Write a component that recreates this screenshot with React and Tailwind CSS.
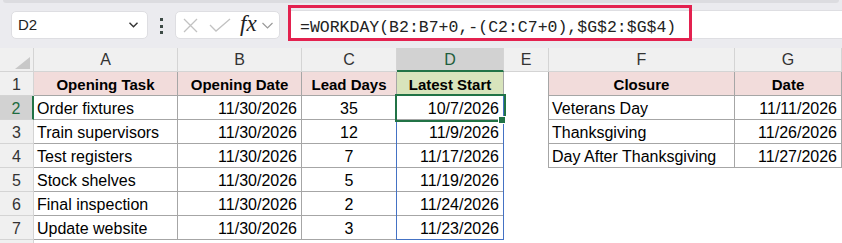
import React from 'react';

const W = ['w-[34px]', 'w-[144px]', 'w-[124px]', 'w-[95px]', 'w-[107px]', 'w-[45px]', 'w-[186px]', 'w-[107px]'];
const letters = ['A', 'B', 'C', 'D', 'E', 'F', 'G'];

const tasks = [
  ['Order fixtures', '11/30/2026', '35', '10/7/2026'],
  ['Train supervisors', '11/30/2026', '12', '11/9/2026'],
  ['Test registers', '11/30/2026', '7', '11/17/2026'],
  ['Stock shelves', '11/30/2026', '5', '11/19/2026'],
  ['Final inspection', '11/30/2026', '2', '11/24/2026'],
  ['Update website', '11/30/2026', '3', '11/23/2026'],
];

const closures = [
  ['Veterans Day', '11/11/2026'],
  ['Thanksgiving', '11/26/2026'],
  ['Day After Thanksgiving', '11/27/2026'],
];

const line = 'border-r border-b border-[#a6a6a6]';

function Cell({ w, className = '', children }) {
  return (
    <div className={`${w} h-[24px] shrink-0 pt-[1px] leading-[23px] whitespace-nowrap ${className}`}>
      {children}
    </div>
  );
}

function RowHead({ n, active }) {
  return (
    <div
      className={`w-[34px] h-[24px] shrink-0 pt-[1px] leading-[23px] text-center border-b border-r border-[#d4d4d4] ${
        active ? 'bg-[#d2d2d2] text-[#1e6b40] border-r-2 border-r-[#217346]' : 'bg-[#f0f0f0] text-[#333]'
      }`}
    >
      {n}
    </div>
  );
}

function Toolbar() {
  return (
    <div className="h-[48px] bg-[#ebebef]">
      <div className="mx-[3px] h-[3px] rounded-b-[3px] bg-[#dcdce0]" />
      <div className="flex items-start pl-[11px] pt-[2px]">
        {/* name box */}
        <div className="mt-[6px] w-[137px] h-[28px] bg-white border border-[#dedee2] rounded-[5px] flex items-center justify-between pl-[6px] pr-[9px]">
          <span className="text-[15px] text-[#222]">D2</span>
          <svg width="9" height="6" viewBox="0 0 9 6">
            <path d="M0.5 0.8 L4.5 4.8 L8.5 0.8" fill="none" stroke="#333" strokeWidth="1.4" />
          </svg>
        </div>
        {/* dots */}
        <div className="ml-[12px] mt-[13px] flex flex-col gap-[3.5px]">
          <span className="w-[3px] h-[3px] bg-[#3c4a45]" />
          <span className="w-[3px] h-[3px] bg-[#3c4a45]" />
          <span className="w-[3px] h-[3px] bg-[#3c4a45]" />
        </div>
        {/* fx box */}
        <div className="ml-[12px] mt-[6px] w-[105px] h-[28px] bg-white border border-[#dedee2] rounded-[5px] flex items-center pl-[7px]">
          <svg width="15" height="15" viewBox="0 0 15 15">
            <path d="M1 1 L14 14 M14 1 L1 14" stroke="#c2c2c2" strokeWidth="1.3" />
          </svg>
          <svg width="22" height="14" viewBox="0 0 22 14" className="ml-[11px]">
            <path d="M1 7 L7 13 L21 1" fill="none" stroke="#c2c2c2" strokeWidth="1.3" />
          </svg>
          <span className="ml-[9px] italic text-[23px] leading-none text-[#222] font-['Liberation_Serif',serif] -mt-[3px]">fx</span>
          <svg width="11" height="7" viewBox="0 0 11 7" className="ml-[5px]">
            <path d="M0.5 1 L5.5 6 L10.5 1" fill="none" stroke="#9a9a9a" strokeWidth="1.2" />
          </svg>
        </div>
        {/* formula */}
        <div className="ml-[8px] flex-1 h-[36px] relative">
          <div className="mt-[5px] h-[29px] bg-white border-y border-[#dedee2] pl-[12px] pt-[5px] leading-[23px] text-[16.5px] text-[#222] font-['Liberation_Mono',monospace] whitespace-nowrap">
            =WORKDAY(B2:B7+0,-(C2:C7+0),$G$2:$G$4)
          </div>
          <div className="absolute left-0 top-0 w-[404px] h-[36px] border-[3px] border-[#e3214f]" />
        </div>
      </div>
    </div>
  );
}

function HeaderRow() {
  return (
    <div className="flex h-[24px] bg-[#f0f0f0] text-[#333]">
      <div className="w-[34px] h-[24px] shrink-0 border-r border-b border-[#d4d4d4] relative">
        <svg width="33" height="23" viewBox="0 0 33 23" className="absolute left-0 top-0">
          <polygon points="30,9 15,21 30,21" fill="#c8c8c8" />
        </svg>
      </div>
      {letters.map((l, i) => (
        <div
          key={l}
          className={`${W[i + 1]} h-[24px] shrink-0 leading-[23px] text-center border-r border-b border-[#d4d4d4] ${
            l === 'D' ? 'bg-[#d2d2d2] text-[#1e5e3c] border-b-2 border-b-[#217346]' : ''
          }`}
        >
          {l}
        </div>
      ))}
    </div>
  );
}

export default function App() {
  return (
    <div className="w-[842px] h-[243px] overflow-hidden bg-white text-[16px] text-black font-['Liberation_Sans',Arial,sans-serif]">
      <Toolbar />
      <HeaderRow />

      {/* row 1 */}
      <div className="flex">
        <RowHead n={1} />
        <Cell w={W[1]} className={`${line} bg-[#f2dcdb] font-bold text-[15px] text-center`}>Opening Task</Cell>
        <Cell w={W[2]} className={`${line} bg-[#f2dcdb] font-bold text-[15px] text-center`}>Opening Date</Cell>
        <Cell w={W[3]} className={`${line} bg-[#f2dcdb] font-bold text-[15px] text-center`}>Lead Days</Cell>
        <Cell w={W[4]} className={`${line} bg-[#d8e4bc] font-bold text-[15px] text-center`}>Latest Start</Cell>
        <Cell w={W[5]} className="border-r border-[#a6a6a6]" />
        <Cell w={W[6]} className={`${line} bg-[#f2dcdb] font-bold text-[15px] text-center`}>Closure</Cell>
        <Cell w={W[7]} className={`${line} bg-[#f2dcdb] font-bold text-[15px] text-center`}>Date</Cell>
      </div>

      {tasks.map((t, i) => {
        const hol = closures[i];
        const active = i === 0;
        return (
          <div className="flex" key={t[0]}>
            <RowHead n={i + 2} active={active} />
            <Cell w={W[1]} className={`${line} pl-[3px]`}>{t[0]}</Cell>
            <Cell w={W[2]} className={`${line} text-right pr-[4px]`}>{t[1]}</Cell>
            <Cell w={W[3]} className={`${line} text-center`}>{t[2]}</Cell>
            <Cell w={W[4]} className={`${line} text-right pr-[4px] ${active ? 'relative' : ''}`}>
              {t[3]}
              {active && (
                <>
                  <div className="absolute -left-[1px] -top-[1px] w-[108px] h-[145px] border border-[#4472c4]" />
                  <div className="absolute -left-[2px] -top-[2px] w-[111px] h-[28px] border-2 border-[#217346]" />
                  <div className="absolute left-[101px] top-[20px] w-[8px] h-[8px] bg-[#217346] border border-white" />
                </>
              )}
            </Cell>
            <Cell w={W[5]} className={hol ? 'border-r border-[#a6a6a6]' : ''} />
            {hol ? (
              <>
                <Cell w={W[6]} className={`${line} pl-[3px]`}>{hol[0]}</Cell>
                <Cell w={W[7]} className={`${line} text-right pr-[4px]`}>{hol[1]}</Cell>
              </>
            ) : (
              <>
                <Cell w={W[6]} />
                <Cell w={W[7]} />
              </>
            )}
          </div>
        );
      })}

      {/* row 8, only its top edge shows */}
      <div className="flex">
        <div className="w-[34px] h-[24px] shrink-0 border-r border-[#d4d4d4] bg-[#f0f0f0]" />
      </div>
    </div>
  );
}
